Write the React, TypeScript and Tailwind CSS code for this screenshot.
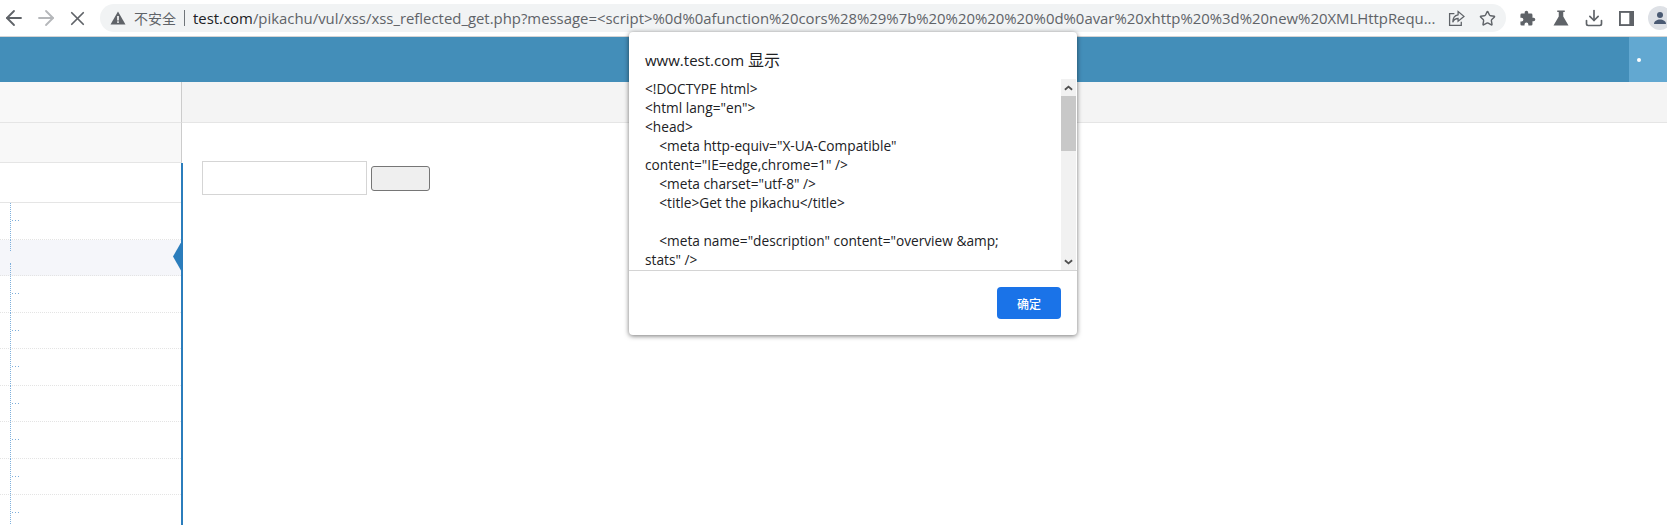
import { ArrowLeft, ArrowRight, X, Star, Download } from 'lucide-react';

const menuRows = [0, 1, 2, 3, 4, 5, 6, 7, 8];

const dialogLines = [
    '<!DOCTYPE html>',
    '<html lang="en">',
    '<head>',
    '    <meta http-equiv="X-UA-Compatible"',
    'content="IE=edge,chrome=1" />',
    '    <meta charset="utf-8" />',
    '    <title>Get the pikachu</title>',
    '',
    '    <meta name="description" content="overview &amp;',
    'stats" />',
];

const url =
    '/pikachu/vul/xss/xss_reflected_get.php?message=<script>%0d%0afunction%20cors%28%29%7b%20%20%20%20%0d%0avar%20xhttp%20%3d%20new%20XMLHttpRequ...';

const Toolbar = () => (
    <div className="flex h-[37px] items-center overflow-hidden border-b border-[#d4d4d4] bg-white pl-[2px] font-['Open_Sans',sans-serif] text-[#5f6368]">
        <ArrowLeft className="h-[24px] w-[24px] shrink-0" strokeWidth={1.8} />
        <ArrowRight className="ml-[8px] h-[24px] w-[24px] shrink-0 text-[#b5b7ba]" strokeWidth={1.8} />
        <X className="ml-[8px] h-[23px] w-[23px] shrink-0" strokeWidth={1.8} />
        <div className="ml-[11px] flex h-[28px] w-[1406px] shrink-0 items-center rounded-full bg-[#f1f3f4] pr-[10px] pl-[10px]">
            <svg viewBox="0 0 16 16" className="h-[16px] w-[16px] shrink-0">
                <path d="M8 1.500 15.500 14.500H.5Z" fill="#5f6368" />
                <rect x="7.200" y="6" width="1.600" height="4.500" fill="#fff" />
                <rect x="7.200" y="11.300" width="1.600" height="1.600" fill="#fff" />
            </svg>
            <span className="ml-[8px] shrink-0 font-['Noto_Sans_CJK_SC',sans-serif] text-[14px]">不安全</span>
            <span className="ml-[8px] h-[16px] w-px shrink-0 bg-[#70757a]" />
            <span className="ml-[8px] w-[1246px] shrink-0 overflow-hidden text-[14.9px] whitespace-nowrap">
                <span className="text-[#202124]">test.com</span>
                {url}
            </span>
            <svg viewBox="0 0 16 16" className="ml-[9px] h-[17px] w-[17px] shrink-0" fill="none" stroke="currentColor" strokeWidth="1.200">
                <path d="M6 3.500H1.500v11h11V11" />
                <path d="M9.500 1.500l5.500 4.500-5.500 4.500V8C7 8 5.500 9 4.500 11.500c0-4 2-6.500 5-7Z" />
            </svg>
            <Star className="ml-[14px] h-[17px] w-[17px] shrink-0" strokeWidth={2} />
        </div>
        <div className="ml-[5px] flex shrink-0 items-center">
            <div className="flex w-[33px] justify-center">
                <svg viewBox="0 0 24 24" className="h-[17px] w-[17px]" fill="currentColor">
                    <path d="M20.500 11H19V7a2 2 0 0 0-2-2h-4V3.500a2.500 2.500 0 0 0-5 0V5H4a2 2 0 0 0-2 2v3.800h1.500a2.700 2.700 0 0 1 0 5.400H2V20a2 2 0 0 0 2 2h3.800v-1.500a2.700 2.700 0 0 1 5.400 0V22H17a2 2 0 0 0 2-2v-4h1.500a2.500 2.500 0 0 0 0-5Z" />
                </svg>
            </div>
            <div className="flex w-[33px] justify-center">
                <svg viewBox="0 0 24 24" className="h-[18px] w-[18px]" fill="currentColor">
                    <path d="M7 2h10v2h-2v6l7 12H2L9 10V4H7Z" />
                </svg>
            </div>
            <div className="flex w-[33px] justify-center">
                <Download className="h-[20px] w-[20px]" strokeWidth={2} />
            </div>
            <div className="flex w-[33px] justify-center">
                <svg viewBox="0 0 16 16" className="h-[15px] w-[15px]">
                    <rect x="1" y="1" width="14" height="14" fill="none" stroke="currentColor" strokeWidth="2" />
                    <rect x="11" y="1" width="4" height="14" fill="currentColor" />
                </svg>
            </div>
            <div className="flex w-[33px] justify-center">
                <div className="flex h-[24px] w-[24px] shrink-0 items-center justify-center rounded-full bg-[#dee1e6]">
                    <svg viewBox="0 0 16 16" className="h-[16px] w-[16px]" fill="#4a5a73">
                        <circle cx="8" cy="5" r="3" />
                        <path d="M2 14c0-3 3-4.500 6-4.500s6 1.500 6 4.500Z" />
                    </svg>
                </div>
            </div>
        </div>
    </div>
);

const Navbar = () => (
    <div className="flex h-[45px] justify-end bg-[#438eb9]">
        <div className="flex w-[38px] items-center bg-[#62a8d1] pl-[8px]">
            <span className="h-[4px] w-[4px] rounded-full bg-white" />
        </div>
    </div>
);

const Sidebar = () => (
    <div className="w-[182px] shrink-0">
        <div className="h-[41px] border-r border-b border-[#e5e5e5] border-r-[#cccccc] bg-[#f8f8f8]" />
        <div className="h-[40px] border-r border-b border-[#e5e5e5] border-r-[#cccccc] bg-[#f8f8f8]" />
        <div className="relative -mr-px border-r-2 border-[#2b7dbc]">
            <div className="h-[40px] border-b border-[#e5e5e5]" />
            {menuRows.map((row) => (
                <div
                    key={row}
                    className={`relative h-[36.5px] border-b border-dotted border-[#e4e4e4] ${
                        row === 1 ? 'bg-[#f5f6fa]' : 'bg-white'
                    }`}
                >
                    <span
                        className={`absolute top-0 left-[10px] w-px border-l border-dotted border-[#7fb0dc] ${
                            row === 1 ? 'h-[11px]' : 'h-[37px]'
                        }`}
                    />
                    {row === 1 ? (
                        <>
                            <span className="absolute top-[23px] left-[10px] h-[14px] border-l border-dotted border-[#7fb0dc]" />
                            <span className="absolute top-[3px] right-0 h-[28px] w-[8px] bg-[#2b7dbc] [clip-path:polygon(100%_0,0_50%,100%_100%)]" />
                        </>
                    ) : (
                        <span className="absolute top-[17px] left-[12px] h-px w-[7px] bg-[repeating-linear-gradient(90deg,#7fb0dc_0,#7fb0dc_1px,transparent_1px,transparent_3px)]" />
                    )}
                </div>
            ))}
        </div>
    </div>
);

const Content = () => (
    <div className="flex-1">
        <div className="h-[41px] border-b border-[#e5e5e5] bg-[#f4f4f4]" />
        <div className="flex items-center gap-[4px] pt-[38px] pl-[20px]">
            <div className="h-[34px] w-[165px] border border-[#d5d5d5] bg-white" />
            <button className="h-[25px] w-[59px] rounded-[3px] border border-[#767676] bg-[#efefef]" />
        </div>
    </div>
);

const AlertDialog = () => (
    <div className="absolute top-[32px] left-[629px] flex h-[303px] w-[448px] flex-col rounded-[4px] bg-white font-['Open_Sans',sans-serif] text-[#202124] shadow-[0_1px_5px_rgba(0,0,0,0.55)]">
        <div className="h-[47px] pt-[17px] pl-[16px] text-[15px] leading-[20px]">
            www.test.com <span className="font-['Noto_Sans_CJK_SC',sans-serif] text-[16px]">显示</span>
        </div>
        <div className="flex h-[192px] border-b border-[#d4d4d4]">
            <div className="flex-1 overflow-hidden pl-[16px] text-[13.7px] leading-[19px] whitespace-pre">
                {dialogLines.map((line, i) => (
                    <div key={i} className="h-[19px]">
                        {line}
                    </div>
                ))}
            </div>
            <div className="mr-px flex w-[15px] flex-col items-center bg-[#f1f1f1]">
                <div className="flex h-[17px] items-center">
                    <svg viewBox="0 0 10 6" className="h-[6px] w-[9px]">
                        <path d="M1 5 5 1.500 9 5" fill="none" stroke="#505050" strokeWidth="2" />
                    </svg>
                </div>
                <div className="h-[55px] w-full bg-[#c8c8c8]" />
                <div className="flex-1" />
                <div className="flex h-[17px] items-center">
                    <svg viewBox="0 0 10 6" className="h-[6px] w-[9px]">
                        <path d="M1 1 5 4.500 9 1" fill="none" stroke="#505050" strokeWidth="2" />
                    </svg>
                </div>
            </div>
        </div>
        <div className="flex justify-end pt-[16px] pr-[16px]">
            <button className="h-[32px] w-[64px] rounded-[4px] bg-[#1a73e8] pt-[1px] font-['Noto_Sans_CJK_SC',sans-serif] text-[12px] font-medium text-white">
                确定
            </button>
        </div>
    </div>
);

export default function App() {
    return (
        <div className="relative h-[525px] w-[1667px] overflow-hidden bg-white">
            <Toolbar />
            <Navbar />
            <div className="flex">
                <Sidebar />
                <Content />
            </div>
            <AlertDialog />
        </div>
    );
}
